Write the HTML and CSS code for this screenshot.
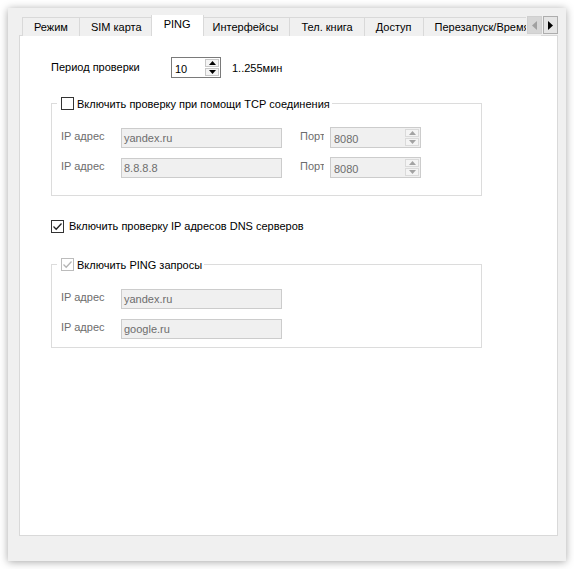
FILE: index.html
```html
<!DOCTYPE html>
<html lang="ru">
<head>
    <meta charset="UTF-8">
    <meta name="viewport" content="width=device-width, initial-scale=1.0">
    <title>PING</title>
    <link rel="stylesheet" href="styles.css">
</head>
<body>
    <div class="window">
        <!-- Tab strip -->
        <div class="tabs">
            <div class="tab">Режим</div>
            <div class="tab">SIM карта</div>
            <div class="tab tab-active">PING</div>
            <div class="tab">Интерфейсы</div>
            <div class="tab">Тел. книга</div>
            <div class="tab">Доступ</div>
            <div class="tab">Перезапуск/Время</div>
            <div class="tab-scroll">
                <div class="scroll-btn scroll-btn-disabled">
                    <svg width="5" height="9" viewBox="0 0 5 9"><path d="M5 0 L0 4.5 L5 9 Z" fill="#a0a0a0"/></svg>
                </div>
                <div class="scroll-btn">
                    <svg width="5" height="9" viewBox="0 0 5 9"><path d="M0 0 L5 4.5 L0 9 Z" fill="#000"/></svg>
                </div>
            </div>
        </div>

        <div class="panel">
            <div class="period-row">
                <div class="period-label">Период проверки</div>
                <div class="spin spin-small">
                    <span class="spin-value">10</span>
                    <div class="spin-btns">
                        <div class="spin-btn"><svg width="7" height="4" viewBox="0 0 7 4"><path d="M0 4 L3.5 0 L7 4 Z" fill="#000"/></svg></div>
                        <div class="spin-btn"><svg width="7" height="4" viewBox="0 0 7 4"><path d="M0 0 L3.5 4 L7 0 Z" fill="#000"/></svg></div>
                    </div>
                </div>
                <div class="period-range">1..255мин</div>
            </div>

            <!-- TCP check group -->
            <fieldset class="group group-tcp">
                <legend class="group-title">
                    <span class="check"></span>Включить проверку при помощи TCP соединения
                </legend>
                <div class="field-row">
                    <div class="field-label">IP адрес</div>
                    <div class="text-input">yandex.ru</div>
                    <div class="port-label">Порт</div>
                    <div class="spin spin-port spin-disabled">
                        <span class="spin-value">8080</span>
                        <div class="spin-btns">
                            <div class="spin-btn"><svg width="7" height="4" viewBox="0 0 7 4"><path d="M0 4 L3.5 0 L7 4 Z" fill="#a3a3a3"/></svg></div>
                            <div class="spin-btn"><svg width="7" height="4" viewBox="0 0 7 4"><path d="M0 0 L3.5 4 L7 0 Z" fill="#a3a3a3"/></svg></div>
                        </div>
                    </div>
                </div>
                <div class="field-row">
                    <div class="field-label">IP адрес</div>
                    <div class="text-input">8.8.8.8</div>
                    <div class="port-label">Порт</div>
                    <div class="spin spin-port spin-disabled">
                        <span class="spin-value">8080</span>
                        <div class="spin-btns">
                            <div class="spin-btn"><svg width="7" height="4" viewBox="0 0 7 4"><path d="M0 4 L3.5 0 L7 4 Z" fill="#a3a3a3"/></svg></div>
                            <div class="spin-btn"><svg width="7" height="4" viewBox="0 0 7 4"><path d="M0 0 L3.5 4 L7 0 Z" fill="#a3a3a3"/></svg></div>
                        </div>
                    </div>
                </div>
            </fieldset>

            <div class="dns-row">
                <span class="check check-on">
                    <svg width="11" height="11" viewBox="0 0 11 11"><path d="M1.5 5.5 L4.2 8.2 L9.5 2.5" fill="none" stroke="#222" stroke-width="1.3"/></svg>
                </span>Включить проверку IP адресов DNS серверов
            </div>

            <!-- PING group -->
            <fieldset class="group group-ping">
                <legend class="group-title">
                    <span class="check check-disabled">
                        <svg width="11" height="11" viewBox="0 0 11 11"><path d="M1.5 5.5 L4.2 8.2 L9.5 2.5" fill="none" stroke="#b5b5b5" stroke-width="1.3"/></svg>
                    </span>Включить PING запросы
                </legend>
                <div class="field-row">
                    <div class="field-label">IP адрес</div>
                    <div class="text-input">yandex.ru</div>
                </div>
                <div class="field-row">
                    <div class="field-label">IP адрес</div>
                    <div class="text-input">google.ru</div>
                </div>
            </fieldset>
        </div>
    </div>
</body>
</html>
```

FILE: styles.css
```css
body {
    margin: 0;
    background: #ffffff;
    font-family: "Liberation Sans", Arial, sans-serif;
    font-size: 11px;
    color: #000;
}

div.window {
    margin: 8px;
    width: 558px;
    height: 553px;
    box-sizing: border-box;
    background: #f0f0f0;
    box-shadow: 0 1px 8px rgba(0, 0, 0, 0.35);
    padding: 7px 8px 25px 11px;
    display: flex;
    flex-direction: column;
}

/* Tabs */
div.tabs {
    position: relative;
    height: 21px;
    padding-left: 3px;
    display: flex;
    align-items: flex-end;
    overflow: hidden;
    z-index: 1;
    margin-bottom: -1px;
}

div.tab {
    height: 19px;
    line-height: 19px;
    padding: 0 11px;
    box-sizing: border-box;
    border: solid 1px #d9d9d9;
    border-bottom: 0px;
    border-right: 0px;
    background: #f0f0f0;
    white-space: nowrap;
    flex-shrink: 0;
}

div.tab-active {
    height: 22px;
    line-height: 19px;
    background: #ffffff;
    border-right: solid 1px #d9d9d9;
    margin: 0 -2px 0 -2px;
    padding: 0 12px;
    position: relative;
    z-index: 2;
}

div.tab-active + div.tab {
    border-left: 0px;
}

div.tab-scroll {
    position: absolute;
    right: 0;
    top: 1px;
    display: flex;
    gap: 1px;
    background: #f0f0f0;
    padding-left: 1px;
    z-index: 3;
}

div.scroll-btn {
    width: 13px;
    height: 16px;
    border: solid 1px #adadad;
    background: #e5e5e5;
    display: flex;
    align-items: center;
    justify-content: center;
}

div.scroll-btn-disabled {
    border-color: #cfcfcf;
    background: #d6d6d6;
}

/* Page */
div.panel {
    flex: 1;
    background: #ffffff;
    border: solid 1px #d9d9d9;
    padding: 21px 0 0 31px;
}

div.period-row {
    display: flex;
    align-items: center;
    height: 21px;
}

div.period-label {
    width: 120px;
    margin-top: -2px;
}

div.period-range {
    margin-left: 11px;
}

/* Spin boxes */
div.spin {
    height: 21px;
    box-sizing: border-box;
    border: solid 1px #7a7a7a;
    background: #ffffff;
    display: flex;
    align-items: center;
    justify-content: space-between;
    padding: 1px 1px 1px 3px;
}

div.spin-small {
    width: 50px;
}

div.spin-port {
    width: 91px;
}

div.spin-disabled {
    border-color: #cccccc;
    background: #f0f0f0;
    color: #6d6d6d;
}

span.spin-value {
    padding-top: 3px;
}

div.spin-btns {
    display: flex;
    flex-direction: column;
    gap: 1px;
    height: 17px;
}

div.spin-btn {
    width: 14px;
    height: 8px;
    box-sizing: border-box;
    border: solid 1px #c7c7c7;
    background: #f4f4f4;
    display: flex;
    align-items: center;
    justify-content: center;
}

div.spin-disabled div.spin-btn {
    border-color: #dadada;
    background: #f4f4f4;
}

/* Group boxes */
fieldset.group {
    width: 431px;
    box-sizing: border-box;
    margin: 0;
    border: solid 1px #dcdcdc;
    padding: 0 0 0 9px;
}

fieldset.group-tcp {
    margin-top: 18px;
    padding-top: 16px;
    padding-bottom: 17px;
}

fieldset.group-ping {
    margin-top: 24px;
    padding-top: 16px;
    padding-bottom: 8px;
}

legend.group-title {
    padding: 0 2px 0 4px;
    margin-left: -4px;
    display: flex;
    align-items: center;
    height: 15px;
}

span.check {
    width: 13px;
    height: 13px;
    box-sizing: border-box;
    border: solid 1px #333333;
    background: #ffffff;
    margin-right: 3px;
    display: inline-flex;
    align-items: center;
    justify-content: center;
    flex-shrink: 0;
}

span.check-disabled {
    border-color: #bcbcbc;
}

div.field-row {
    display: flex;
    align-items: center;
    height: 21px;
    color: #6d6d6d;
}

div.field-row + div.field-row {
    margin-top: 9px;
}

div.field-label {
    width: 60px;
    margin-top: -4px;
}

div.text-input {
    width: 161px;
    height: 20px;
    box-sizing: border-box;
    border: solid 1px #cccccc;
    background: #f0f0f0;
    padding: 3px 0 0 2px;
}

/* label is narrower than its text, the last letter is cut */
div.port-label {
    width: 24px;
    margin: -4px 6px 0 18px;
    overflow: hidden;
    white-space: nowrap;
}

div.dns-row {
    display: flex;
    align-items: center;
    margin-top: 23px;
    height: 14px;
}

div.dns-row span.check {
    margin-right: 5px;
}
```
